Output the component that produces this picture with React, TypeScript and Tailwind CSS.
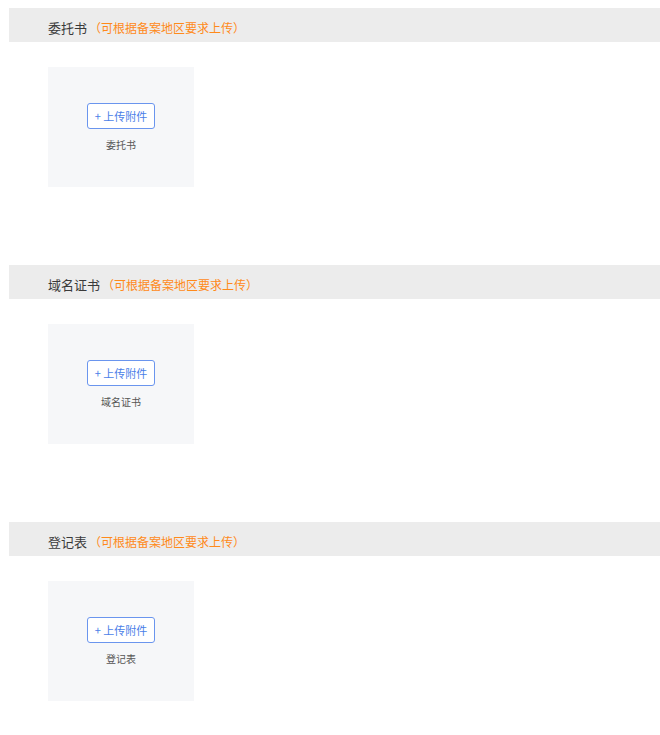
const sections = ["委托书", "域名证书", "登记表"]

function UploadSection({ title }: { title: string }) {
  return (
    <div className="pb-[78px]">
      {/* header bar */}
      <div className="ml-[9px] h-[34px] bg-[#ececec] flex items-center pl-[39px] pt-[6px]">
        <span className="text-[13px] text-[#3a3a3a]">{title}</span>
        <span className="text-[12px] text-[#ff8a1a] ml-[2px]">（可根据备案地区要求上传）</span>
      </div>

      {/* upload card */}
      <div className="ml-[48px] mt-[25px] w-[146px] h-[120px] bg-[#f6f7f9] flex flex-col items-center pt-[36px]">
        <button className="w-[68px] h-[26px] border border-[#6a95ee] rounded-[3px] bg-white text-[11px] text-[#4c7fe8] flex items-center justify-center">
          + 上传附件
        </button>
        <div className="mt-[8px] text-[10px] text-[#555]">{title}</div>
      </div>
    </div>
  )
}

export default function App() {
  return (
    <div
      className="w-[660px] h-[735px] overflow-hidden bg-white pt-[8px]"
      style={{ fontFamily: '"Noto Sans CJK SC", "Liberation Sans", sans-serif' }}
    >
      {sections.map((s) => (
        <UploadSection key={s} title={s} />
      ))}
    </div>
  )
}
